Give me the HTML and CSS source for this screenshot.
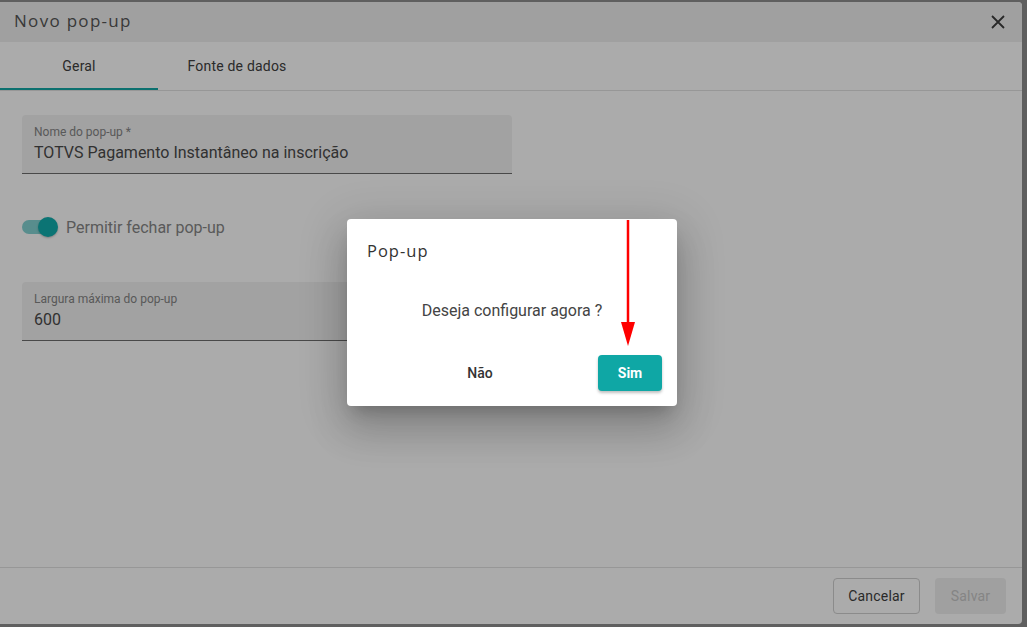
FILE: index.html
```html
<!DOCTYPE html>
<html lang="pt">
<head>
<meta charset="utf-8">
<title>Novo pop-up</title>
<link rel="stylesheet" href="styles.css">
</head>
<body>
<div class="panel">
  <header class="panel-header">
    <h1 class="panel-title">Novo pop-up</h1>
    <button class="close-btn" aria-label="Fechar">
      <svg width="14" height="14" viewBox="0 0 14 14"><path d="M1 1L13 13M13 1L1 13" stroke="#3c3c3c" stroke-width="1.8" fill="none"/></svg>
    </button>
  </header>
  <nav class="tabs">
    <div class="tab active">Geral</div>
    <div class="tab">Fonte de dados</div>
  </nav>
  <main class="content">
    <div class="field">
      <span class="field-label">Nome do pop-up *</span>
      <span class="field-value">TOTVS Pagamento Instantâneo na inscrição</span>
    </div>
    <div class="toggle-row">
      <span class="toggle"><span class="toggle-track"></span><span class="toggle-thumb"></span></span>
      <span class="toggle-label">Permitir fechar pop-up</span>
    </div>
    <div class="field field-2">
      <span class="field-label">Largura máxima do pop-up</span>
      <span class="field-value">600</span>
    </div>
  </main>
  <footer class="panel-footer">
    <button class="btn btn-outline">Cancelar</button>
    <button class="btn btn-disabled">Salvar</button>
  </footer>
</div>
<div class="overlay"></div>
<div class="dialog">
  <div class="dialog-title">Pop-up</div>
  <div class="dialog-message">Deseja configurar agora ?</div>
  <div class="dialog-actions">
    <button class="dbtn dbtn-text">Não</button>
    <button class="dbtn dbtn-primary">Sim</button>
  </div>
</div>
<svg class="arrow" width="16" height="128" viewBox="0 0 16 128">
  <line x1="8" y1="1" x2="8" y2="106" stroke="#ff0000" stroke-width="2.5"/>
  <polygon points="1,103 15,103 8,127" fill="#ff0000"/>
</svg>
</body>
</html>
```
FILE: styles.css
```css
* { box-sizing: border-box; }
html, body { margin: 0; padding: 0; }
body {
  width: 1027px;
  height: 627px;
  background: #8e8e8e;
  font-family: Roboto, "Liberation Sans", Arial, sans-serif;
  overflow: hidden;
  position: relative;
}
button { font-family: inherit; cursor: pointer; }

.panel {
  width: 1022px;
  height: 622px;
  margin-top: 2px;
  background: #ffffff;
  border-radius: 0 4px 4px 0;
  display: flex;
  flex-direction: column;
  overflow: hidden;
}
.panel-header {
  height: 40px;
  flex: none;
  background: #efefef;
  display: flex;
  align-items: center;
  justify-content: space-between;
  padding: 0 17px 2px 14px;
}
.panel-title {
  margin: 0;
  font-family: "Open Sans", sans-serif;
  font-weight: 400;
  font-size: 17px;
  line-height: 22px;
  color: #555;
  letter-spacing: 1.3px;
}
.close-btn {
  border: 0;
  background: transparent;
  padding: 0;
  width: 14px;
  height: 14px;
  display: flex;
  margin-top: 2px;
}
.tabs {
  height: 49px;
  flex: none;
  display: flex;
  border-bottom: 1px solid #e2e2e2;
}
.tab {
  width: 158px;
  display: flex;
  align-items: center;
  justify-content: center;
  font-size: 14px;
  font-weight: 400;
  letter-spacing: 0.2px;
  color: #404040;
  padding-bottom: 1px;
}
.tab.active {
  border-bottom: 2px solid #12a7a6;
  padding-bottom: 0;
  padding-top: 1px;
}
.content {
  flex: 1;
  padding: 24px 22px 0;
  display: flex;
  flex-direction: column;
  align-items: flex-start;
}
.field {
  width: 490px;
  height: 59px;
  background: #f2f2f2;
  border-radius: 4px 4px 0 0;
  border-bottom: 1px solid #6e6e6e;
  padding: 10px 12px 0;
  display: flex;
  flex-direction: column;
}
.field-label {
  font-size: 12px;
  line-height: 14px;
  color: #858585;
}
.field-value {
  font-size: 16px;
  line-height: 20px;
  margin-top: 4px;
  color: #4a4a4a;
}
.field-2 { margin-top: 45px; }
.toggle-row {
  margin-top: 43px;
  display: flex;
  align-items: center;
  height: 20px;
}
.toggle {
  position: relative;
  width: 36px;
  height: 20px;
  display: flex;
  align-items: center;
}
.toggle-track {
  width: 30px;
  height: 14px;
  border-radius: 7px;
  background: rgba(17, 169, 168, 0.52);
}
.toggle-thumb {
  position: absolute;
  left: 16px;
  top: 0;
  width: 20px;
  height: 20px;
  border-radius: 50%;
  background: #11aeae;
  box-shadow: 0 1px 2px rgba(0,0,0,0.25);
}
.toggle-label {
  margin-left: 8px;
  font-size: 16px;
  color: #878787;
}
.panel-footer {
  height: 57px;
  flex: none;
  border-top: 1px solid #e2e2e2;
  display: flex;
  justify-content: flex-end;
  align-items: flex-start;
  padding: 10px 16px 0 0;
  gap: 15px;
}
.btn {
  height: 36px;
  border-radius: 4px;
  font-size: 14px;
  font-weight: 400;
  letter-spacing: 0.2px;
  padding-bottom: 2px;
}
.btn-outline {
  width: 87px;
  background: #fff;
  border: 1px solid #cfcfcf;
  color: #3e3e3e;
}
.btn-disabled {
  width: 71px;
  background: #efefef;
  border: 0;
  color: #c6c6c6;
}

.overlay {
  position: absolute;
  inset: 0;
  background: rgba(0, 0, 0, 0.33);
}
.dialog {
  position: absolute;
  left: 347px;
  top: 219px;
  width: 330px;
  height: 187px;
  background: #fff;
  border-radius: 4px;
  padding: 20px 15px 15px 20px;
  display: flex;
  flex-direction: column;
  box-shadow: 0 11px 15px -7px rgba(0,0,0,.2), 0 24px 38px 3px rgba(0,0,0,.14), 0 9px 46px 8px rgba(0,0,0,.12);
}
.dialog-title {
  font-family: "Open Sans", sans-serif;
  font-size: 16.5px;
  line-height: 24px;
  color: #333;
  letter-spacing: 1px;
}
.dialog-message {
  margin-top: 36px;
  margin-right: 5px;
  text-align: center;
  font-size: 16px;
  line-height: 24px;
  color: #444;
}
.dialog-actions {
  margin-top: 32px;
  display: flex;
  justify-content: flex-end;
  gap: 86px;
}
.dbtn {
  width: 64px;
  height: 36px;
  border: 0;
  border-radius: 4px;
  font-size: 14px;
}
.dbtn-text {
  background: transparent;
  color: #333;
  font-weight: 500;
}
.dbtn-primary {
  background: #0fa7a5;
  color: #fff;
  font-weight: 700;
  box-shadow: 0 2px 3px rgba(0,0,0,0.25);
}
.arrow {
  position: absolute;
  left: 620px;
  top: 219px;
}
```
